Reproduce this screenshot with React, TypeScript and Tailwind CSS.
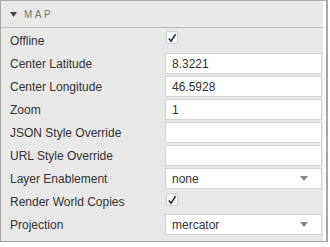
import React from "react";

const font = { fontFamily: '"Liberation Sans", Arial, sans-serif' };

function Check() {
  return (
    <div className="mt-[1px] ml-[1px] flex h-[13px] w-[12px] items-center justify-center rounded-[2px] border border-[#d0d0d0] bg-[#f8f8f8]">
      <svg width="10" height="10" viewBox="0 0 10 10">
        <path d="M1.8 5.6 L4 8.2 L8.6 1.2" fill="none" stroke="#1c2a4a" strokeWidth="1.5" />
      </svg>
    </div>
  );
}

function Input({ value }: { value?: string }) {
  return (
    <div className="flex h-[21px] w-full items-center border border-[#d4d4d4] bg-white pl-[6px] text-[12px] text-[#333]">
      {value}
    </div>
  );
}

function Select({ value }: { value: string }) {
  return (
    <div className="flex h-[21px] w-full items-center justify-between border border-[#d4d4d4] bg-white pl-[6px] pr-[13px] text-[12px] text-[#333]">
      <span>{value}</span>
      <svg width="8" height="5" viewBox="0 0 8 5">
        <path d="M0 0 L8 0 L4 5 Z" fill="#888" />
      </svg>
    </div>
  );
}

function Row({ label, children }: { label: string; children: React.ReactNode }) {
  return (
    <div className="flex h-[21px]">
      <div className="flex w-[164px] items-center pl-[9px] text-[12px] text-[#333]">{label}</div>
      <div className="flex w-[157px] items-start">{children}</div>
    </div>
  );
}

export default function App() {
  return (
    <div className="flex h-[247px] w-[330px] items-start bg-white" style={font}>
      <div className="flex h-[242px] w-[328px] border-y border-l border-r-2 border-[#a8a8a8]">
        <div className="flex w-[322px] flex-col bg-[#e8e8e8]">
          <div className="flex h-[27px] items-center gap-[7px] border-b border-[#bcbcbc] pl-[9px]">
            <svg width="7" height="5" viewBox="0 0 7 5">
              <path d="M0 0 L7 0 L3.5 5 Z" fill="#444" />
            </svg>
            <span className="text-[10px] tracking-[2.5px] text-[#777]">MAP</span>
          </div>
          <div className="flex flex-col gap-[2px] pt-[2px]">
            <Row label="Offline">
              <Check />
            </Row>
            <Row label="Center Latitude">
              <Input value="8.3221" />
            </Row>
            <Row label="Center Longitude">
              <Input value="46.5928" />
            </Row>
            <Row label="Zoom">
              <Input value="1" />
            </Row>
            <Row label="JSON Style Override">
              <Input />
            </Row>
            <Row label="URL Style Override">
              <Input />
            </Row>
            <Row label="Layer Enablement">
              <Select value="none" />
            </Row>
            <Row label="Render World Copies">
              <div className="mt-[1px]">
                <Check />
              </div>
            </Row>
            <Row label="Projection">
              <Select value="mercator" />
            </Row>
          </div>
        </div>
        <div className="w-[3px] bg-white" />
      </div>
    </div>
  );
}
